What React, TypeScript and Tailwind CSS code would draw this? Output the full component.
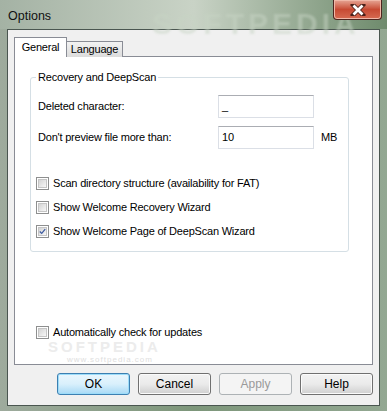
import React from 'react'

function Check({ checked, label }: { checked?: boolean; label: string }) {
  return (
    <div className="flex items-center h-[13px]">
      <div className="w-[13px] h-[13px] border border-[#8e8f8f] bg-white p-[1px] shrink-0">
        <div className="w-full h-full border border-[#c5c5c5] bg-gradient-to-br from-[#d4d4d4] to-[#f7f7f7] flex items-center justify-center">
          {checked && (
            <svg width="9" height="9" viewBox="0 0 9 9">
              <path d="M1 4.5 L3.5 7 L8 1.5" fill="none" stroke="#3d5aa0" strokeWidth="1.6" />
            </svg>
          )}
        </div>
      </div>
      <span className="ml-[4px] whitespace-nowrap">{label}</span>
    </div>
  )
}

function Btn({ label, focused, disabled }: { label: string; focused?: boolean; disabled?: boolean }) {
  const base = 'w-[73px] h-[22px] rounded-[3px] border flex items-center justify-center text-[12px] tracking-normal'
  if (focused) {
    return (
      <div className={`${base} border-[#3c7fb1] bg-gradient-to-b from-[#eaf6fd] via-[#d9f0fc] to-[#a7d9f5] shadow-[inset_0_0_0_1px_#9cdcf9] text-black`}>
        {label}
      </div>
    )
  }
  if (disabled) {
    return <div className={`${base} border-[#adb2b5] bg-[#f4f4f4] text-[#9a9a9a]`}>{label}</div>
  }
  return (
    <div className={`${base} border-[#707070] bg-gradient-to-b from-[#f2f2f2] via-[#ebebeb] to-[#cfcfcf] shadow-[inset_0_0_0_1px_#fbfbfb] text-black`}>
      {label}
    </div>
  )
}

export default function App() {
  return (
    <div
      className="w-[387px] h-[411px] relative overflow-hidden bg-gradient-to-r from-[#9eab9d] via-[#7d967a] to-[#93a892] text-[11px] tracking-[-0.2px] text-black"
      style={{ fontFamily: '"Liberation Sans", Arial, sans-serif' }}
    >
      {/* glass title bar */}
      <div className="h-[29px] flex items-start justify-between bg-gradient-to-r from-[#a4b2a4] via-[#c9d3c6] to-[#6f8b6d] relative">
        <span className="absolute left-[152px] top-[1px] text-[30px] font-bold tracking-[4px] text-[#c7d4c4] opacity-50 blur-[1px]">SOFTPEDIA</span>
        <span className="pl-[8px] pt-[7px] text-[12.5px] tracking-normal text-[#111] relative">Options</span>
        <div className="mr-[5px] w-[49px] h-[20px] rounded-b-[4px] border border-t-0 border-[#4e2620] bg-gradient-to-b from-[#e5a595] via-[#c74a33] to-[#d66b52] shadow-[inset_0_0_0_1px_#f0b8a8] flex items-center justify-center relative">
          <svg width="16" height="12" viewBox="0 0 16 12">
            <path d="M3 1 L13 11 M13 1 L3 11" stroke="#4a2018" strokeWidth="4.4" strokeLinecap="square" />
            <path d="M3.5 1.5 L12.5 10.5 M12.5 1.5 L3.5 10.5" stroke="#ffffff" strokeWidth="2.8" />
          </svg>
        </div>
      </div>

      {/* client area */}
      <div className="mx-[7px] h-[377px] border border-[#4a5650] bg-[#f0f0f0] px-[6px] pt-[8px] flex flex-col">
        {/* tabs */}
        <div className="flex items-end h-[19px] relative z-10">
          <div className="h-[20px] w-[53px] border border-b-0 border-[#898c95] bg-white flex items-center justify-center pb-[1px]">
            General
          </div>
          <div className="h-[16px] w-[56px] border border-l-0 border-b-0 border-[#898c95] bg-gradient-to-b from-[#f2f2f2] to-[#dcdcdc] flex items-center justify-center">
            Language
          </div>
        </div>

        {/* panel */}
        <div className="h-[309px] border border-[#898c95] bg-white -mt-[1px] relative">
          <div className="ml-[15px] mt-[20px] w-[319px] h-[175px] border border-[#d5dfe5] rounded-[3px] relative">
            <span className="absolute -top-[8px] left-[5px] bg-white px-[2px] leading-[14px]">Recovery and DeepScan</span>
            <div className="pl-[7px] pt-[17px] flex flex-col gap-[8px]">
              <div className="flex items-center">
                <span className="w-[180px]">Deleted character:</span>
                <div className="w-[96px] h-[23px] border border-[#dbdfe6] border-t-[#abadb3] bg-white pl-[3px] flex items-center">_</div>
              </div>
              <div className="flex items-center">
                <span className="w-[180px]">Don't preview file more than:</span>
                <div className="w-[96px] h-[23px] border border-[#dbdfe6] border-t-[#abadb3] bg-white pl-[3px] flex items-center">10</div>
                <span className="ml-[7px]">MB</span>
              </div>
            </div>
            <div className="pl-[5px] pt-[28px] flex flex-col gap-[11px]">
              <Check label="Scan directory structure (availability for FAT)" />
              <Check label="Show Welcome Recovery Wizard" />
              <Check checked label="Show Welcome Page of DeepScan Wizard" />
            </div>
          </div>

          <div className="ml-[21px] mt-[74px]">
            <Check label="Automatically check for updates" />
          </div>
          <span className="absolute left-[33px] top-[282px] text-[15px] leading-[15px] font-bold tracking-[3px] text-[#ececec] pointer-events-none">SOFTPEDIA</span>
          <span className="absolute left-[52px] top-[298px] text-[8px] leading-[9px] tracking-[1px] text-[#dedede]">www.softpedia.com</span>
        </div>

        {/* buttons */}
        <div className="mt-[8px] flex justify-end gap-[8px]">
          <Btn label="OK" focused />
          <Btn label="Cancel" />
          <Btn label="Apply" disabled />
          <Btn label="Help" />
        </div>
      </div>
    </div>
  )
}
